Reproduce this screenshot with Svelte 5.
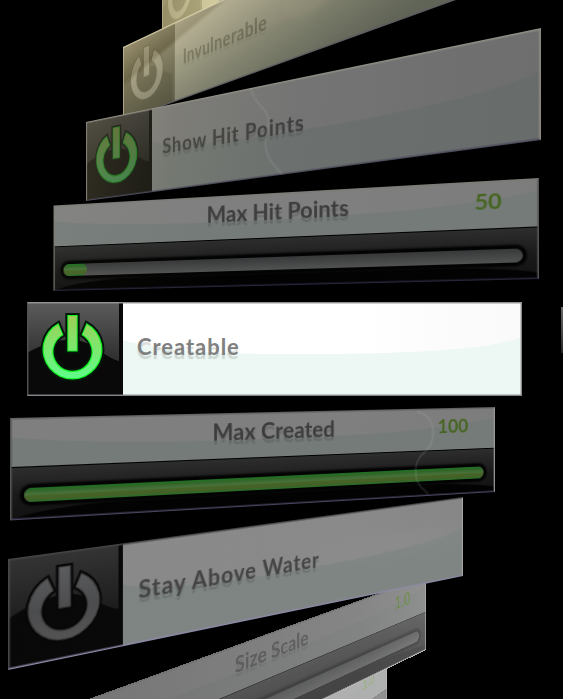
<script>
  const W = 495;
  const H = 94;

  // Corners run top-left, top-right, bottom-right, bottom-left.
  // Panels are listed from the far ends of the carousel to the active one.
  const panels = [
    {
      kind: 'toggle', label: '', tone: 'far',
      quad: [162, -30, 480, -312, 480, -187, 162, 44],
      veil: 'linear-gradient(90deg, rgba(172,162,118,.86), rgba(205,196,145,.86) 25%, rgba(190,182,132,.87))',
      edge: '#d5cda4', side: '#c8bf94', foot: '#777'
    },
    {
      kind: 'toggle', label: 'Invulnerable', tone: 'far',
      quad: [123, 47, 520, -141.6, 520, -23.2, 123, 120.5],
      veil: 'radial-gradient(circle at 285px 32px, rgba(165,165,130,.12) 0 22px, transparent 30px), linear-gradient(165deg, rgba(171,160,117,.76), rgba(123,114,76,.76) 20%, rgba(153,147,111,.77) 23%, rgba(108,105,80,.79) 52%, rgba(65,67,51,.81) 85%)',
      edge: '#dbd3ae', side: '#c4bc94', foot: '#5c5b60'
    },
    {
      kind: 'slider', label: '', value: '1.0', fill: 0, tone: 'far',
      quad: [60, 856, 387, 653, 387, 727, 60, 981],
      veil: 'linear-gradient(90deg, rgba(145,145,145,.82), rgba(160,160,160,.8))',
      edge: '#bbb', side: '#c4c4c4', foot: '#bbb'
    },
    {
      kind: 'slider', label: 'Size Scale', value: '1.0', fill: 0, tone: 'dim',
      quad: [20, 724, 426, 576, 426, 650, 20, 847],
      veil: 'linear-gradient(90deg, rgba(72,72,72,.76), rgba(92,92,92,.74) 75%, rgba(108,108,108,.74))',
      edge: '#707070', side: '#b0b0b0', foot: '#bcbcbc'
    },
    {
      kind: 'toggle', label: 'Show Hit Points', on: true, tone: 'mid',
      quad: [86, 122, 541, 28, 541, 140, 86, 201],
      veil: 'linear-gradient(100deg, rgba(75,69,49,.6), rgba(39,38,29,.6) 25%, rgba(23,23,23,.6) 55%, rgba(21,21,21,.61))',
      edge: '#918f84', side: '#8c8a80', foot: '#4d4c5c', squiggle: 'M221 0 C223 18 243 24 241 40 C238 56 230 68 257 94'
    },
    {
      kind: 'toggle', label: 'Stay Above Water', on: false, tone: 'mid',
      quad: [8, 559, 463, 497, 463, 576, 8, 670],
      veil: 'radial-gradient(ellipse at 82% 45%, rgba(160,160,160,.13), transparent 30%), linear-gradient(90deg, rgba(8,8,8,.48), rgba(10,10,10,.48))',
      edge: '#444', side: '#484848', far: '#aaa', foot: '#8d8aa8'
    },
    {
      kind: 'slider', label: 'Max Hit Points', value: '50', fill: 28, tone: 'mid',
      quad: [53.5, 205.5, 539, 178, 539, 279, 53.5, 291],
      veil: 'linear-gradient(90deg, rgba(8,8,5,.5), rgba(0,0,0,.5) 40%)',
      edge: '#7c7b76', side: '#7d7a6c', far: '#555', foot: '#26263a'
    },
    {
      kind: 'slider', label: 'Max Created', value: '100', fill: 469, tone: 'mid',
      quad: [10, 418, 495, 407, 495, 492, 10, 520.5],
      veil: 'linear-gradient(90deg, rgba(0,0,0,.5), rgba(0,0,0,.5))',
      edge: '#606060', side: '#555', far: '#999', foot: '#47455f', squiggle: 'M402 3 C419 7 425 21 418 39 C411 50 398 50 401 73 C404 86 413 88 415 92'
    },
    {
      kind: 'toggle', label: 'Creatable', on: true, tone: 'active',
      quad: [27, 302, 522, 302, 522, 396, 27, 396],
      veil: 'none', edge: '#929292', side: '#54524e', far: '#8c8c8c', foot: '#85858c'
    }
  ];

  // Projective map from the flat W x H panel to its four screen corners.
  function project([x0, y0, x1, y1, x2, y2, x3, y3]) {
    const dx1 = x1 - x2, dx2 = x3 - x2, dx3 = x0 - x1 + x2 - x3;
    const dy1 = y1 - y2, dy2 = y3 - y2, dy3 = y0 - y1 + y2 - y3;
    const det = dx1 * dy2 - dx2 * dy1;
    const g = (dx3 * dy2 - dx2 * dy3) / det;
    const h = (dx1 * dy3 - dx3 * dy1) / det;
    const m = [
      (x1 - x0 + g * x1) / W, (y1 - y0 + g * y1) / W, 0, g / W,
      (x3 - x0 + h * x3) / H, (y3 - y0 + h * y3) / H, 0, h / H,
      0, 0, 1, 0,
      x0, y0, 0, 1
    ];
    return `matrix3d(${m.map((n) => n.toFixed(8)).join(',')})`;
  }
</script>

<main class="stage">
  <div class="neighbour"></div>
  {#each panels as p}
    <section
      class="panel {p.kind} {p.tone}"
      style="transform: {project(p.quad)}; --veil: {p.veil}; --edge: {p.edge}; --side: {p.side}; --far: {p.far ?? p.side}; --foot: {p.foot}"
    >
      {#if p.kind === 'toggle'}
        <div class="cell" class:on={p.on}>
          <svg viewBox="0 0 96 94" width="96" height="94">
            <defs>
              <linearGradient id="lit" gradientUnits="userSpaceOnUse" x1="0" y1="12" x2="0" y2="80">
                <stop offset="0" stop-color="#a0cc55" />
                <stop offset=".45" stop-color="#80e56c" />
                <stop offset="1" stop-color="#5cff8c" />
              </linearGradient>
              <linearGradient id="unlit" gradientUnits="userSpaceOnUse" x1="0" y1="12" x2="0" y2="80">
                <stop offset="0" stop-color="#a8aaae" />
                <stop offset=".55" stop-color="#8a8b8e" />
                <stop offset="1" stop-color="#9a9a9a" />
              </linearGradient>
            </defs>
            <path class="shade" d="M0 51 C20 40 34 37 48 38 C66 40 77 55 92 59 V94 H0 Z" />
            <g class="power">
              <path class="rim" d="M31.5 21 A30 30 0 1 0 59.5 21 L54.5 33 A19 19 0 1 1 36.5 33 Z" />
              <path class="rim" d="M40.3 13 H50.7 V49.5 H40.3 Z" />
              <path class="glow" d="M31.1 22.6 A28.8 28.8 0 1 0 59.9 22.6 L55.8 32.5 A20.2 20.2 0 1 1 35.2 32.5 Z" />
              <path class="glow" d="M41.3 14 H49.7 V48.5 H41.3 Z" />
            </g>
          </svg>
        </div>
        <div class="face">
          <svg class="gloss" viewBox="0 0 399 94" preserveAspectRatio="none">
            <path d="M0 38 C50 54 150 52 220 52 C320 50 370 46 399 35 V94 H0 Z" />
          </svg>
          <span class="label">{p.label}</span>
        </div>
      {:else}
        <header class="face">
          <svg class="gloss" viewBox="0 0 495 46" preserveAspectRatio="none">
            <path d="M0 18 C90 31 300 28 370 25 C430 22 465 17 495 12 V46 H0 Z" />
          </svg>
          <span class="label">{p.label}</span>
          <span class="value">{p.value}</span>
        </header>
        <div class="well">
          <svg class="gloss" viewBox="0 0 495 48" preserveAspectRatio="none">
            <path d="M0 48 C40 33 130 34 250 34 C370 34 450 34 495 42 V48 Z" />
          </svg>
          <div class="track">
            {#if p.fill}<div class="fill" style="width: {p.fill}px"></div>{/if}
          </div>
        </div>
      {/if}
      <div class="veil">
        {#if p.squiggle}
          <svg viewBox="0 0 495 94" width="495" height="94"><path d={p.squiggle} /></svg>
        {/if}
      </div>
    </section>
  {/each}
</main>

<style>
  :global(body) {
    margin: 0;
    background: #000;
  }
  .stage {
    position: relative;
    width: 563px;
    height: 699px;
    overflow: hidden;
    background: #000;
    font-family: Lato, 'Open Sans', sans-serif;
    font-weight: 700;
  }
  .neighbour {
    position: absolute;
    left: 561px;
    top: 307px;
    width: 2px;
    height: 46px;
    background: linear-gradient(#666, #444 60%, #222);
  }
  .panel {
    position: absolute;
    left: 0;
    top: 0;
    width: 495px;
    height: 94px;
    display: flex;
    transform-origin: 0 0;
    background: #0a0a0a;
  }
  .slider {
    flex-direction: column;
  }
  .cell {
    width: 96px;
    height: 94px;
    flex: none;
    box-sizing: border-box;
    background: linear-gradient(#5c5c5c, #303030 60%);
    border-right: 4px solid #080808;
  }
  .far .cell {
    border-right-width: 1px;
  }
  .cell svg {
    display: block;
    overflow: hidden;
    width: 96px;
  }
  .shade {
    fill: #090909;
  }
  .rim {
    fill: #777;
    stroke: #060606;
    stroke-width: 4px;
    paint-order: stroke;
  }
  .glow {
    fill: url(#unlit);
  }
  .far .glow {
    fill: #c8c8c8;
  }
  .far .rim {
    fill: #aaa;
    stroke-width: 2px;
  }
  .on .rim {
    fill: #10f024;
    stroke: #07160a;
  }
  .on .glow {
    fill: url(#lit);
  }
  .face {
    position: relative;
    flex: 1;
    display: flex;
    align-items: center;
    background: linear-gradient(90deg, #fff 60%, #f9f9f9);
  }
  .slider .face {
    flex: none;
    height: 46px;
    justify-content: center;
    box-sizing: border-box;
    border-bottom: 1px solid #000;
  }
  .gloss {
    position: absolute;
    inset: 0;
    width: 100%;
    height: 100%;
    fill: #eaf6f2;
  }
  .active .face .gloss {
    fill: #edf8f4;
  }
  .label {
    position: relative;
    font-size: 22px;
    line-height: 26px;
    letter-spacing: 0;
    white-space: nowrap;
    color: #808080;
    text-shadow: 0 4px 1px rgba(100, 110, 110, 0.24);
  }
  .toggle .label {
    margin: -4px 0 0 14px;
    letter-spacing: 0.95px;
  }
  .far.toggle .label {
    letter-spacing: 0.5px;
    color: #5c5c5c;
  }
  .mid .label {
    color: #7a7a7a;
  }
  .slider .label {
    top: -3.5px;
  }
  .value {
    position: absolute;
    right: 32.5px;
    top: 5.5px;
    font-size: 21px;
    line-height: 26px;
    color: #8fd63c;
  }
  .mid .value {
    color: #8fcb46;
  }
  .far .value,
  .dim .value {
    color: #a0ff30;
    right: 31px;
  }
  .well {
    position: relative;
    flex: 1;
    background: linear-gradient(#5a5a5a, #333 55%, #222);
  }
  .well .gloss {
    fill: #050505;
  }
  .track {
    position: relative;
    margin: 19px 14px 0 12px;
    height: 13px;
    border-radius: 7px;
    background: linear-gradient(#6e7072, #a2a4a4);
    box-shadow: 0 0 0 3px #060606, 0 0 2px 4px #111;
  }
  .fill {
    height: 13px;
    border-radius: 7px;
    background: linear-gradient(#38e044, #62cc50 20%, #96e47c 48%, #88cc4c 55%, #8cc050 80%, #48e04c);
  }
  .veil {
    position: absolute;
    inset: 0;
    box-sizing: border-box;
    background: var(--veil) border-box;
    border: 1px solid var(--edge);
    border-left-color: var(--side);
    border-right-color: var(--far);
    border-bottom-color: var(--foot);
    box-shadow:
      inset 0 1px 0 color-mix(in srgb, var(--edge) 45%, transparent),
      inset 0 -1px 0 color-mix(in srgb, var(--foot) 45%, transparent),
      inset 1px 0 0 color-mix(in srgb, var(--side) 45%, transparent),
      inset -1px 0 0 color-mix(in srgb, var(--far) 45%, transparent);
  }
  .veil svg {
    position: absolute;
    left: -1px;
    top: -1px;
    fill: none;
    stroke: rgba(190, 195, 195, 0.12);
    stroke-width: 2.5px;
  }
</style>
